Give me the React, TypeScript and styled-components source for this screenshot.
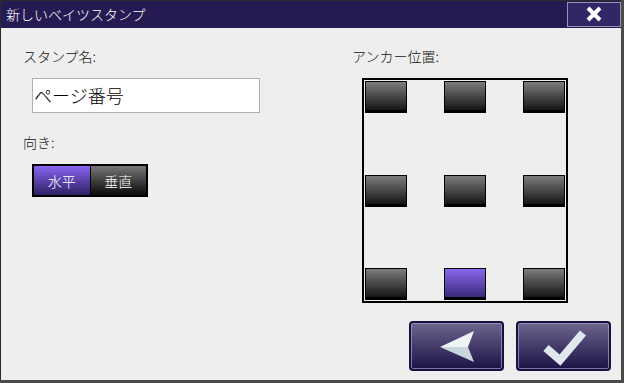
import React, { useState } from 'react';
import styled, { createGlobalStyle } from 'styled-components';

const GlobalStyle = createGlobalStyle`
    body {
        margin: 0;
        background: #4a4a4a;
        font-family: "Noto Sans CJK JP", "Noto Sans", sans-serif;
        font-weight: 300;
    }
`

const Window = styled.div`
    width: 620px;
    height: 379px;
    border-left: 1px solid #2a2a2a;
    border-top: 1px solid #2a2a2a;
    background: #eeeeee;
    display: flex;
    flex-direction: column;
`

const TitleBar = styled.div`
    height: 27px;
    background: #251a52;
    display: flex;
    align-items: center;
    justify-content: space-between;
    padding-left: 5px;
    padding-right: 0px;
`

const Title = styled.div`
    color: #ffffff;
    font-size: 14px;
    line-height: 17px;
`

const CloseButton = styled.div`
    width: 52px;
    height: 23px;
    margin-top: -1px;
    border: 1px solid #9a93b8;
    background: #2f2766;
    display: flex;
    align-items: center;
    justify-content: center;
`

const Content = styled.div`
    flex: 1;
    display: flex;
    flex-direction: column;
`

const Columns = styled.div`
    display: flex;
    flex-direction: row;
    padding-top: 20px;
`

const LeftColumn = styled.div`
    width: 329px;
    padding-left: 22px;
    display: flex;
    flex-direction: column;
`

const RightColumn = styled.div`
    display: flex;
    flex-direction: column;
`

const Label = styled.div`
    font-size: 14px;
    line-height: 17px;
    color: #111111;
`

const NameInput = styled.div`
    margin-top: 13px;
    margin-left: 9px;
    width: 225px;
    height: 33px;
    border: 1px solid #b0b0b4;
    background: #ffffff;
    font-size: 18px;
    line-height: 33px;
    padding-left: 1px;
    color: #000000;
    box-sizing: content-box;
`

const SecondLabel = styled(Label)`
    margin-top: 21px;
`

const Toggle = styled.div`
    margin-top: 13px;
    margin-left: 9px;
    width: 112px;
    height: 29px;
    border: 2px solid #000000;
    display: flex;
    flex-direction: row;
    background: #000000;
    gap: 1px;
`

const ToggleOption = styled.div<{ $active: boolean }>`
    flex: 1;
    display: flex;
    align-items: center;
    justify-content: center;
    color: #ffffff;
    font-size: 14px;
    background: ${(p) => p.$active
        ? 'linear-gradient(to bottom, #8a64f2, #2c2064)'
        : 'linear-gradient(to bottom, #767676, #0a0a0a)'};
`

const AnchorBox = styled.div`
    margin-top: 13px;
    margin-left: 10px;
    width: 200px;
    height: 219px;
    border: 2px solid #000000;
    padding: 1px;
    display: grid;
    grid-template-columns: repeat(3, 42px);
    grid-template-rows: repeat(3, 32px);
    justify-content: space-between;
    align-content: space-between;
`

const AnchorCell = styled.div<{ $active: boolean }>`
    box-sizing: border-box;
    border: 1px solid #000000;
    border-bottom-width: 3px;
    background: ${(p) => p.$active
        ? 'linear-gradient(to bottom, #8a66ee, #3a2a7c)'
        : 'linear-gradient(to bottom, #7c7c7c, #161616)'};
`

const Footer = styled.div`
    margin-top: auto;
    display: flex;
    flex-direction: row;
    justify-content: flex-end;
    gap: 12px;
    padding-right: 10px;
    padding-bottom: 9px;
`

const ActionButton = styled.div`
    box-sizing: border-box;
    width: 95px;
    height: 50px;
    border: 2px solid #1a1040;
    border-radius: 4px;
    box-shadow: inset 0 0 0 1px rgba(170, 160, 205, 0.7);
    background: linear-gradient(to bottom, #6e658f, #1c1246);
    display: flex;
    align-items: center;
    justify-content: center;
`

function BackIcon(): JSX.Element {
    return (
        <svg width="91" height="46" viewBox="0 0 91 46">
            <polygon points="29,24 63,8 57,24" fill="#eef3f6" />
            <polygon points="29,24 57,24 63,39" fill="#c9d6de" />
        </svg>
    )
}

function CheckIcon(): JSX.Element {
    return (
        <svg width="91" height="46" viewBox="0 0 91 46">
            <polyline points="28,25 42,37 65,10" fill="none" stroke="#dfe8ee"
                strokeWidth="8" strokeLinejoin="miter" />
        </svg>
    )
}

function CloseIcon(): JSX.Element {
    return (
        <svg width="16" height="16" viewBox="0 0 16 16">
            <path d="M2 2 L14 14 M14 2 L2 14" stroke="#ffffff" strokeWidth="4" />
        </svg>
    )
}

export default function App(): JSX.Element {
    const [horizontal, setHorizontal] = useState(true);
    const [anchor, setAnchor] = useState(7);

    return (
        <>
            <GlobalStyle />
            <Window>
                <TitleBar>
                    <Title>新しいベイツスタンプ</Title>
                    <CloseButton><CloseIcon /></CloseButton>
                </TitleBar>
                <Content>
                    <Columns>
                        <LeftColumn>
                            <Label>スタンプ名:</Label>
                            <NameInput>ページ番号</NameInput>
                            <SecondLabel>向き:</SecondLabel>
                            <Toggle>
                                <ToggleOption $active={horizontal}
                                    onClick={() => setHorizontal(true)}>水平</ToggleOption>
                                <ToggleOption $active={!horizontal}
                                    onClick={() => setHorizontal(false)}>垂直</ToggleOption>
                            </Toggle>
                        </LeftColumn>
                        <RightColumn>
                            <Label>アンカー位置:</Label>
                            <AnchorBox>
                                {Array.from({ length: 9 }).map((_, i) => (
                                    <AnchorCell $active={i === anchor}
                                        onClick={() => setAnchor(i)}
                                        key={`anchor-${i}`} />
                                ))}
                            </AnchorBox>
                        </RightColumn>
                    </Columns>
                    <Footer>
                        <ActionButton><BackIcon /></ActionButton>
                        <ActionButton><CheckIcon /></ActionButton>
                    </Footer>
                </Content>
            </Window>
        </>
    )
}
